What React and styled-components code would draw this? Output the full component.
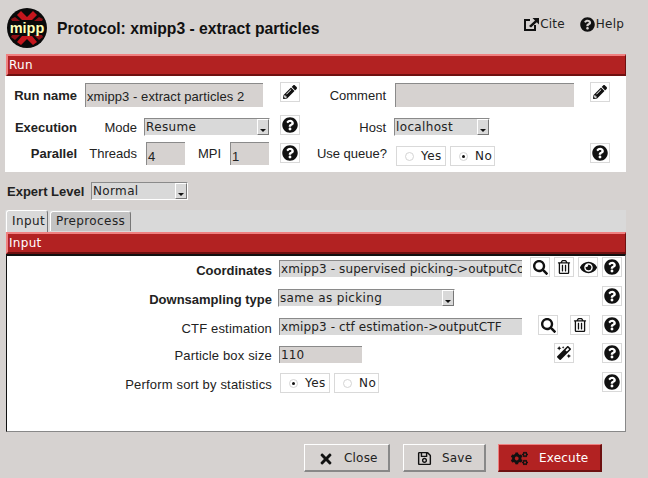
import React from 'react';
import styled, { createGlobalStyle } from 'styled-components';
import {
  FaPencilAlt,
  FaQuestionCircle,
  FaSearch,
  FaRegTrashAlt,
  FaEye,
  FaMagic,
  FaTimes,
  FaRegSave,
  FaCogs,
} from 'react-icons/fa';

const GlobalStyle = createGlobalStyle`
  html, body {
    margin: 0;
    padding: 0;
    background: #d6d2d0;
  }
`;

const Page = styled.div`
  width: 648px;
  height: 478px;
  overflow: hidden;
  display: flex;
  flex-direction: column;
  background: #d6d2d0;
  font-family: "Liberation Sans", Arial, sans-serif;
  color: #111;
`;

const Top = styled.header`
  height: 54px;
  flex: none;
  display: flex;
  align-items: flex-start;
  padding: 8px 24px 0 7px;
  box-sizing: border-box;
`;

const Title = styled.h1`
  margin: 11px 0 0 10px;
  font-size: 15.7px;
  line-height: 20px;
  font-weight: 700;
`;

const TopLinks = styled.div`
  margin-left: auto;
  margin-top: 8px;
  display: flex;
  gap: 15px;
`;

const TopLink = styled.span`
  display: flex;
  align-items: center;
  gap: 1px;
  font: 12px/16px "DejaVu Sans", sans-serif;
  letter-spacing: 0.2px;
  color: #222;
  svg { font-size: 15px; color: #111; }
`;

const Section = styled.section`
  width: 621px;
  margin-left: 5px;
  flex: none;
`;

const Band = styled.div`
  box-sizing: border-box;
  height: 22px;
  margin-left: 1px;
  padding-left: 1px;
  background: #b22222;
  border-style: solid;
  border-width: 2px 1px 2px 2px;
  border-color: #f08080 #6e1010 #6e1010 #f08080;
  color: #fff;
  font: 12px/19px "DejaVu Sans", sans-serif;
  letter-spacing: 0.3px;
`;

const RunBody = styled.div`
  background: #fff;
  height: 96px;
  box-sizing: border-box;
  padding-top: 6px;
`;

const Row = styled.div`
  display: flex;
  align-items: center;
  height: ${p => p.$h}px;
  margin-top: ${p => p.$mt || 0}px;
`;

const Label = styled.span`
  flex: none;
  width: ${p => p.$w}px;
  text-align: right;
  font-size: 13px;
  font-weight: ${p => (p.$bold ? 700 : 400)};
  color: #222;
  white-space: nowrap;
`;

const TextField = styled.div`
  flex: none;
  box-sizing: border-box;
  width: ${p => p.$w}px;
  height: ${p => p.$h}px;
  margin-left: ${p => p.$ml || 0}px;
  margin-top: ${p => p.$mt || 0}px;
  padding: ${p => p.$pt || 1}px 0 0 1px;
  background: ${p => p.$bg || '#d6d2d0'};
  border-top: 1px solid #8a8a8a;
  border-left: 1px solid #8a8a8a;
  font: ${p => (p.$sans ? '13px/15px "Liberation Sans", sans-serif' : '12px/15px "DejaVu Sans", sans-serif')};
  letter-spacing: ${p => (p.$sans ? 0.07 : 0.12)}px;
  color: #222;
  overflow: hidden;
  white-space: nowrap;
`;

const SelectBox = styled.div`
  flex: none;
  box-sizing: border-box;
  position: relative;
  width: ${p => p.$w}px;
  height: 18px;
  margin-left: ${p => p.$ml || 0}px;
  margin-top: ${p => p.$mt || 0}px;
  padding: 1px 0 0 1px;
  background: #d9d9d9;
  border-style: solid;
  border-width: 1px;
  border-color: #8a8a8a #fff #fff #8a8a8a;
  font: 12px/15px "DejaVu Sans", sans-serif;
  letter-spacing: 0.35px;
  color: #222;
`;

const Arrow = styled.i`
  position: absolute;
  right: 0;
  top: 0;
  width: 12px;
  height: 16px;
  box-sizing: border-box;
  background: #d9d9d9;
  border-style: solid;
  border-width: 1px;
  border-color: #fff #777 #777 #fff;
  &::after {
    content: '';
    position: absolute;
    left: 2px;
    bottom: 2px;
    width: 0;
    height: 0;
    border-left: 3px solid transparent;
    border-right: 3px solid transparent;
    border-top: 3px solid #111;
  }
`;

const Select = ({ value, ...rest }) => (
  <SelectBox {...rest}>
    {value}
    <Arrow />
  </SelectBox>
);

const IconButton = styled.button`
  flex: none;
  align-self: flex-start;
  box-sizing: border-box;
  width: 20px;
  height: 20px;
  margin: ${p => p.$mt || 0}px 0 0 ${p => p.$ml || 0}px;
  padding: 0;
  display: flex;
  align-items: center;
  justify-content: center;
  background: #fff;
  border: 1px solid #d9d9d9;
  color: #111;
  font-size: ${p => p.$size || 14}px;
`;

const RadioBox = styled.label`
  flex: none;
  align-self: flex-start;
  box-sizing: border-box;
  width: ${p => p.$w}px;
  height: 20px;
  margin: ${p => p.$mt || 0}px 0 0 ${p => p.$ml || 0}px;
  padding-left: 8px;
  display: flex;
  align-items: center;
  gap: 7px;
  background: #fff;
  border: 1px solid #d9d9d9;
  font: 12px/15px "DejaVu Sans", sans-serif;
  letter-spacing: 0.4px;
  color: #222;
`;

const RadioDot = styled.i`
  flex: none;
  box-sizing: border-box;
  width: 9px;
  height: 9px;
  border-radius: 50%;
  border: 1px solid #d4d4d4;
  display: flex;
  align-items: center;
  justify-content: center;
  &::after {
    content: '';
    width: 3px;
    height: 3px;
    border-radius: 50%;
    background: ${p => (p.$on ? '#111' : 'transparent')};
  }
`;

const Radio = ({ on, text, ...rest }) => (
  <RadioBox {...rest}>
    <RadioDot $on={on} />
    {text}
  </RadioBox>
);

const ExpertRow = styled.div`
  height: 38px;
  flex: none;
  display: flex;
  align-items: center;
  padding-left: 7px;
`;

const TabBar = styled.div`
  height: 22px;
  display: flex;
  align-items: flex-end;
  padding-left: 1px;
  background: #d9d9d9;
`;

const Tab = styled.div`
  box-sizing: border-box;
  width: ${p => p.$w}px;
  height: ${p => (p.$active ? 22 : 20)}px;
  margin-right: ${p => (p.$active ? 2 : 0)}px;
  margin-bottom: ${p => (p.$active ? 0 : 1)}px;
  padding-left: 5px;
  background: ${p => (p.$active ? '#d9d9d9' : '#c3c3c3')};
  border-style: solid;
  border-width: 1px 1px 0 1px;
  border-color: #fff #777 #777 #fff;
  border-radius: 3px 3px 0 0;
  font: 12px/${p => (p.$active ? 21 : 18)}px "DejaVu Sans", sans-serif;
  letter-spacing: 0.4px;
  color: #222;
`;

const InputBody = styled.div`
  box-sizing: border-box;
  height: 178px;
  margin-left: 1px;
  padding: 1px 3px 0 0;
  background: #fff;
  border-top: 2px solid #111;
  border-left: 1px solid #111;
  border-right: 1px solid #888;
  border-bottom: 1px solid #888;
`;

const ParamRow = styled.div`
  display: flex;
  align-items: flex-start;
  height: ${p => p.$h || 29}px;
`;

const ParamLabel = styled.span`
  flex: none;
  width: 265px;
  margin-top: ${p => p.$mt || 5}px;
  text-align: right;
  font-size: 13px;
  line-height: 16px;
  font-weight: ${p => (p.$bold ? 700 : 400)};
  letter-spacing: ${p => (p.$bold ? 0 : 0.17)}px;
  color: #222;
`;

const Actions = styled.div`
  margin-left: auto;
  display: flex;
  gap: ${p => p.$gap || 4}px;
  margin-top: ${p => p.$mt || 0}px;
`;

const Footer = styled.footer`
  flex: 1;
  display: flex;
  align-items: flex-start;
  padding: 12px 0 0 304px;
`;

const Button = styled.button`
  box-sizing: border-box;
  width: ${p => p.$w}px;
  height: 28px;
  margin-right: ${p => p.$mr || 0}px;
  padding: 2px 0 0 ${p => p.$pl || 13}px;
  display: flex;
  align-items: center;
  gap: ${p => p.$gap || 12}px;
  background: ${p => (p.$primary ? '#b22222' : '#d6d2d0')};
  border-style: solid;
  border-width: 1px 2px 2px 1px;
  border-color: ${p =>
    p.$primary ? '#f08080 #6e1010 #6e1010 #f08080' : '#fff #888 #888 #fff'};
  color: ${p => (p.$primary ? '#fff' : '#222')};
  font: 12px/15px "DejaVu Sans", sans-serif;
  letter-spacing: 0.2px;
  svg { font-size: ${p => p.$icon || 15}px; color: #111; flex: none; }
`;

const Logo = () => (
  <svg width="40" height="40" viewBox="0 0 40 40">
    <circle cx="20" cy="20" r="20" fill="#0a0a0a" />
    <path d="M10 7 L14 3 L20 9 L26 3 L30 7 L25 12 H15 Z" fill="#c5161d" />
    <path d="M4 11 L8 9 L13 13 H5 Z M36 11 L32 9 L27 13 H35 Z" fill="#8e1016" />
    <path d="M10 34 L14 37 L20 31 L26 37 L30 34 L25 28 H15 Z" fill="#c5161d" />
    <path d="M4 29 L8 32 L13 27 H5 Z M36 29 L32 32 L27 27 H35 Z" fill="#8e1016" />
    <text
      x="20"
      y="25"
      textAnchor="middle"
      fontFamily="Liberation Sans"
      fontWeight="700"
      fontSize="14.5"
      fill="#ffffb8"
    >
      mipp
    </text>
  </svg>
);

const CiteIcon = () => (
  <svg width="16" height="16" viewBox="0 0 16 16">
    <path d="M7 4 H2 V14 H12 V9" fill="none" stroke="#111" strokeWidth="2" />
    <path d="M6 10 L12 4.5 L9.5 2 H16 V8.5 L13.8 6.3 L8 11.5 Z" fill="#111" />
  </svg>
);

const Help = props => (
  <IconButton $size={16} {...props}>
    <FaQuestionCircle />
  </IconButton>
);

export default function App() {
  return (
    <Page>
      <GlobalStyle />
      <Top>
        <Logo />
        <Title>Protocol: xmipp3 - extract particles</Title>
        <TopLinks>
          <TopLink><CiteIcon />Cite</TopLink>
          <TopLink><FaQuestionCircle />Help</TopLink>
        </TopLinks>
      </Top>

      <Section>
        <Band>Run</Band>
        <RunBody>
          <Row $h={26}>
            <Label $w={72} $bold>Run name</Label>
            <TextField $w={178} $h={24} $ml={8} $pt={5} $sans>xmipp3 - extract particles 2</TextField>
            <IconButton $ml={17}><FaPencilAlt /></IconButton>
            <Label $w={86}>Comment</Label>
            <TextField $w={179} $h={24} $ml={9} />
            <IconButton $ml={16}><FaPencilAlt /></IconButton>
          </Row>
          <Row $h={24} $mt={7}>
            <Label $w={72} $bold>Execution</Label>
            <Label $w={60}>Mode</Label>
            <Select $w={126} $ml={7} value="Resume" />
            <Help $ml={10} />
            <Label $w={86}>Host</Label>
            <Select $w={96} $ml={8} value="localhost" />
          </Row>
          <Row $h={25} $mt={2}>
            <Label $w={72} $bold>Parallel</Label>
            <Label $w={60}>Threads</Label>
            <TextField $w={39} $h={23} $ml={9} $pt={6} $sans>4</TextField>
            <Label $w={36}>MPI</Label>
            <TextField $w={39} $h={23} $ml={9} $pt={6} $sans>1</TextField>
            <Help $ml={11} $mt={2} />
            <Label $w={87}>Use queue?</Label>
            <Radio $w={50} $ml={9} $mt={5} text="Yes" />
            <Radio $w={45} $ml={4} $mt={5} text="No" on />
            <Help $ml={95} $mt={2} />
          </Row>
        </RunBody>
      </Section>

      <ExpertRow>
        <Label $w={77} $bold>Expert Level</Label>
        <Select $w={97} $ml={7} value="Normal" />
      </ExpertRow>

      <Section>
        <TabBar>
          <Tab $w={42} $active>Input</Tab>
          <Tab $w={81}>Preprocess</Tab>
        </TabBar>
        <Band>Input</Band>
        <InputBody>
          <ParamRow>
            <ParamLabel $bold $mt={6}>Coordinates</ParamLabel>
            <TextField $w={243} $h={17} $ml={7} $mt={3} $bg="#d9d9d9">
              xmipp3 - supervised picking-&gt;outputCoordinates
            </TextField>
            <Actions>
              <IconButton $size={15}><FaSearch /></IconButton>
              <IconButton><FaRegTrashAlt /></IconButton>
              <IconButton $size={17}><FaEye /></IconButton>
              <Help />
            </Actions>
          </ParamRow>
          <ParamRow>
            <ParamLabel $bold $mt={6}>Downsampling type</ParamLabel>
            <Select $w={177} $ml={6} $mt={3} value="same as picking" />
            <Actions><Help /></Actions>
          </ParamRow>
          <ParamRow $h={28}>
            <ParamLabel $mt={6}>CTF estimation</ParamLabel>
            <TextField $w={243} $h={17} $ml={7} $mt={3} $bg="#d9d9d9">
              xmipp3 - ctf estimation-&gt;outputCTF
            </TextField>
            <Actions $gap={12}>
              <IconButton $size={15}><FaSearch /></IconButton>
              <IconButton><FaRegTrashAlt /></IconButton>
              <Help />
            </Actions>
          </ParamRow>
          <ParamRow>
            <ParamLabel>Particle box size</ParamLabel>
            <TextField $w={83} $h={17} $ml={7} $mt={3}>110</TextField>
            <Actions $gap={28}>
              <IconButton><FaMagic /></IconButton>
              <Help />
            </Actions>
          </ParamRow>
          <ParamRow>
            <ParamLabel>Perform sort by statistics</ParamLabel>
            <Radio $w={50} $ml={8} $mt={1} text="Yes" on />
            <Radio $w={45} $ml={4} $mt={1} text="No" />
            <Actions><Help /></Actions>
          </ParamRow>
        </InputBody>
      </Section>

      <Footer>
        <Button $w={86} $mr={13} $icon={16} $gap={10}><FaTimes />Close</Button>
        <Button $w={83} $mr={12} $gap={10}><FaRegSave />Save</Button>
        <Button $w={104} $primary $gap={11} $pl={12} $icon={17}><FaCogs />Execute</Button>
      </Footer>
    </Page>
  );
}
